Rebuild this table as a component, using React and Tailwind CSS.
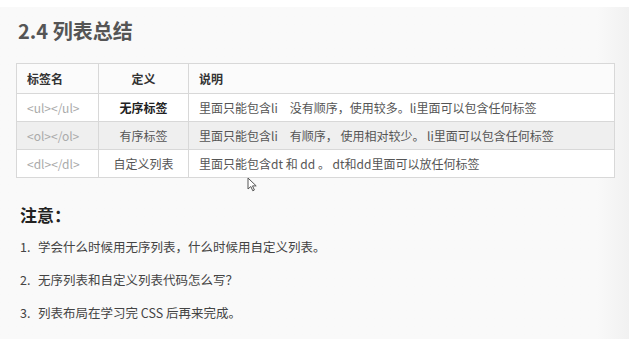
const rows = [
  { tag: "<ul></ul>", name: "无序标签", bold: true, desc: "里面只能包含li\u3000没有顺序，使用较多。li里面可以包含任何标签", bg: "bg-white" },
  { tag: "<ol></ol>", name: "有序标签", desc: "里面只能包含li\u3000有顺序， 使用相对较少。 li里面可以包含任何标签", bg: "bg-[#efefef]" },
  { tag: "<dl></dl>", name: "自定义列表", desc: "里面只能包含dt 和 dd 。 dt和dd里面可以放任何标签", bg: "bg-white" },
];

const notes = [
  "学会什么时候用无序列表，什么时候用自定义列表。",
  "无序列表和自定义列表代码怎么写？",
  "列表布局在学习完 CSS 后再来完成。",
];

export default function App() {
  return (
    <div
      className="relative w-[629px] h-[339px] overflow-hidden bg-white"
      style={{ fontFamily: '"Noto Sans CJK SC", "Noto Sans", sans-serif' }}
    >
      <div className="mt-[7px] h-[332px] bg-gradient-to-r from-[#f9f9f9] via-[#f9f9f9] via-95% to-[#f1f1f1] px-4 pt-[11px]">
        <h1 className="text-[20px] leading-[26px] font-bold text-[#555] pl-[2px]">2.4 列表总结</h1>

        <table className="mt-[19px] w-[599px] border-collapse text-[12px] text-[#444]">
          <thead>
            <tr className="h-[30px] bg-[#fbfbfb]">
              <th className="w-[82px] border border-[#d8d8d8] pl-[10px] text-left font-bold text-[#333]">标签名</th>
              <th className="w-[90px] border border-[#d8d8d8] text-center font-bold text-[#333]">定义</th>
              <th className="border border-[#d8d8d8] pl-[10px] text-left font-bold text-[#333]">说明</th>
            </tr>
          </thead>
          <tbody>
            {rows.map((r) => (
              <tr key={r.tag} className={`h-[28px] ${r.bg}`}>
                <td className="border border-[#d8d8d8] pl-[10px] text-[#aaa]">{r.tag}</td>
                <td className={`border border-[#d8d8d8] text-center ${r.bold ? "font-bold text-[#222]" : "text-[#555]"}`}>{r.name}</td>
                <td className="border border-[#d8d8d8] pl-[10px] text-[#555]">{r.desc}</td>
              </tr>
            ))}
          </tbody>
        </table>

        <h2 className="mt-[26px] pl-[4px] text-[17px] leading-[22px] font-bold text-[#222]">注意：</h2>

        <ol className="mt-[13px] pl-[4px] text-[12.5px] text-[#444] flex flex-col gap-[17px]">
          {notes.map((n, i) => (
            <li key={i} className="flex leading-[16px]">
              <span className="w-[18px]">{i + 1}.</span>
              <span>{n}</span>
            </li>
          ))}
        </ol>
      </div>

      {/* mouse pointer */}
      <svg className="absolute left-[247px] top-[177px]" width="11" height="15" viewBox="0 0 11 15">
        <path d="M1 1 L1 12 L3.8 9.5 L5.8 13.8 L7.4 13 L5.5 8.9 L9.2 8.9 Z" fill="#fff" stroke="#555" strokeWidth="1" strokeLinejoin="round" />
      </svg>
    </div>
  );
}
